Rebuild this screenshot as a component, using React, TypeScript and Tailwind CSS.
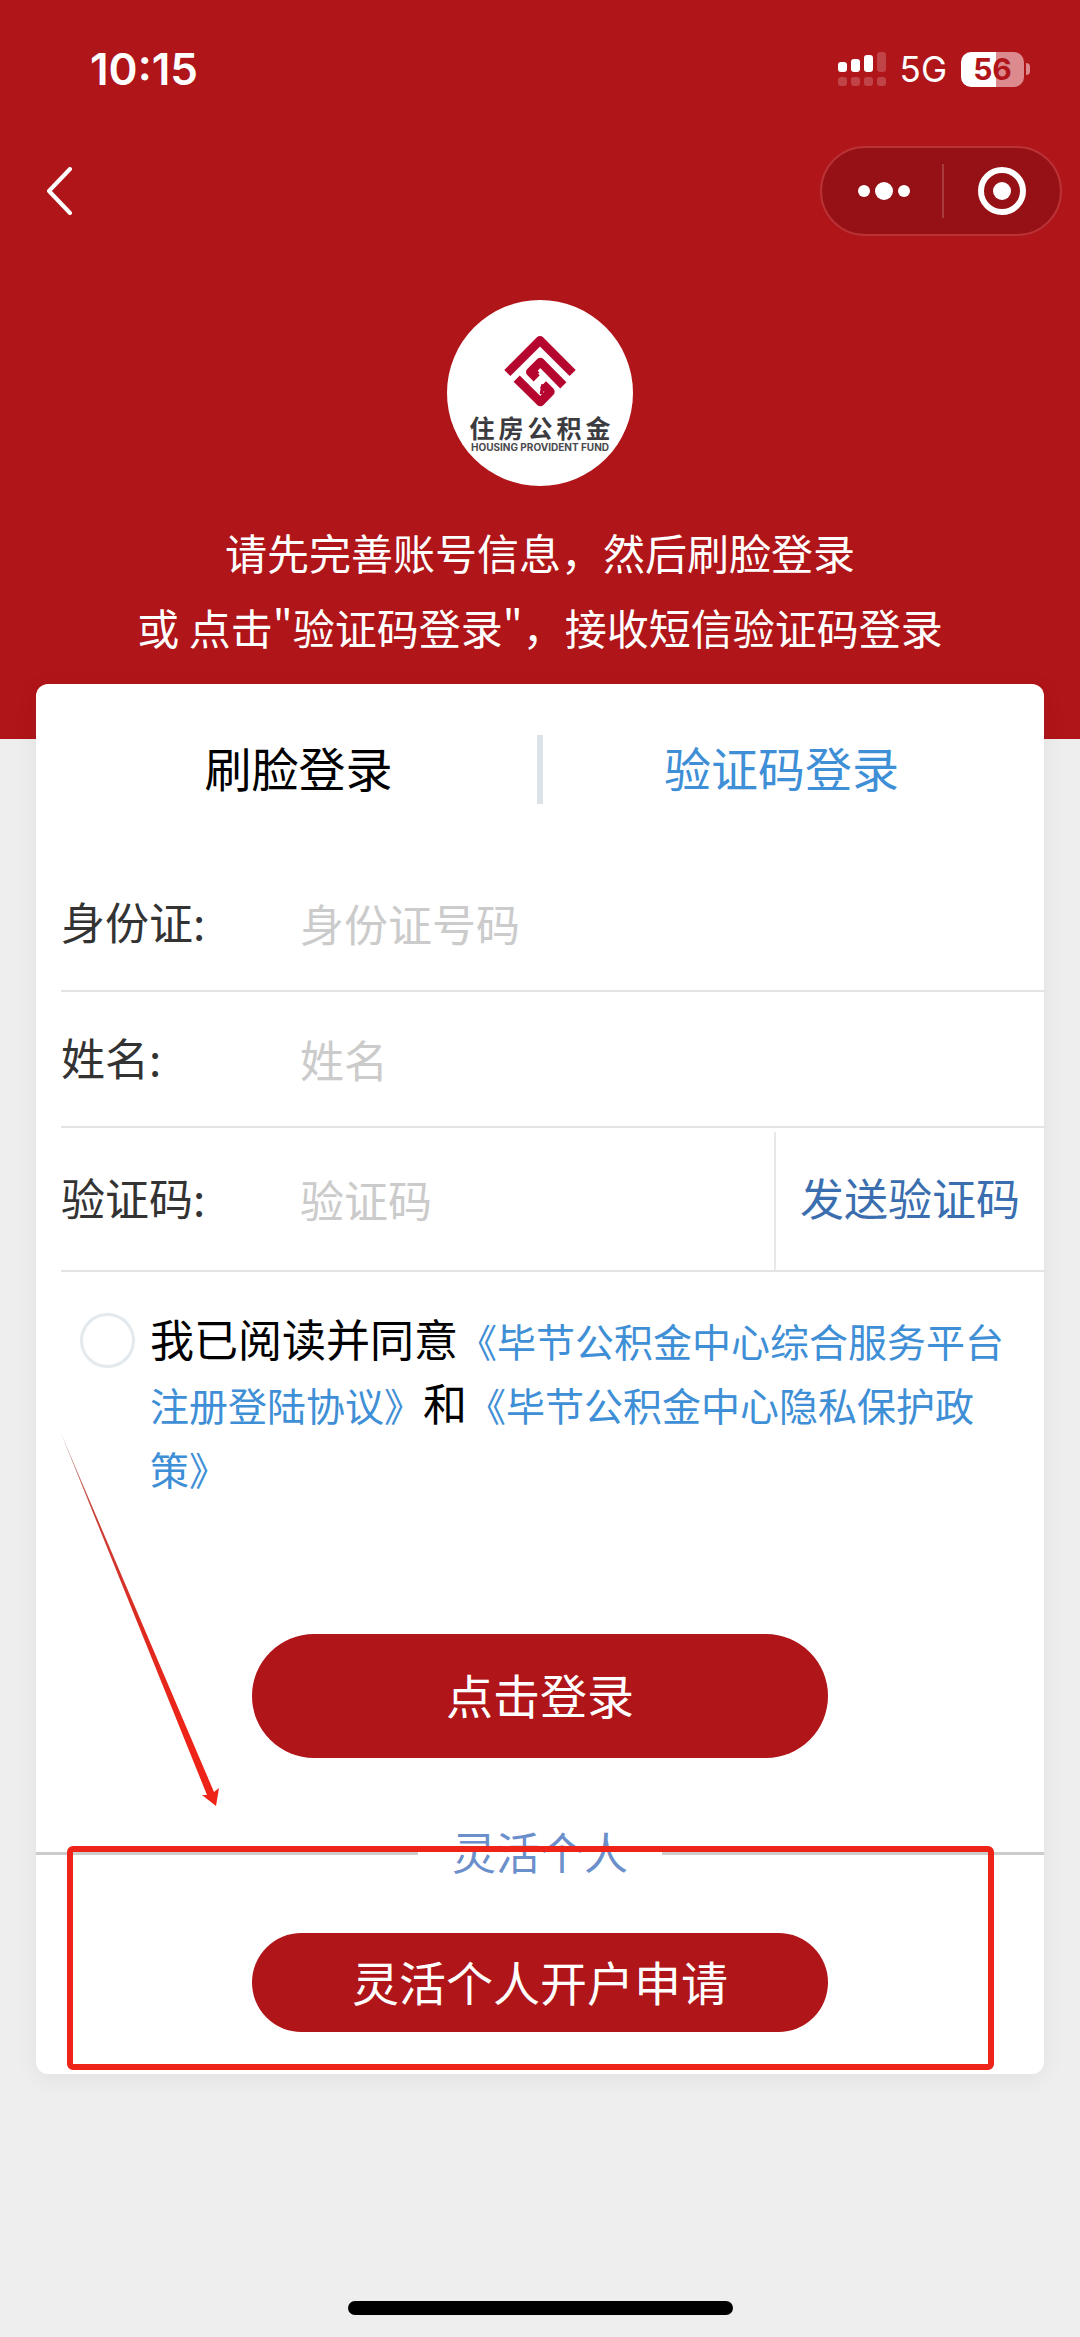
import React from "react";

function StatusBar() {
  return (
    <div className="flex h-[138px] items-center justify-between pl-[90px] pr-[50px]">
      <span className="text-[44px] leading-[52px] font-semibold font-['Inter',sans-serif]">10:15</span>
      <div className="flex items-center gap-[14px]">
        <svg className="h-9 w-12" viewBox="0 0 48 36" fill="#fff" aria-label="信号">
          <rect x="0" y="11" width="9" height="10" rx="3" />
          <rect x="13" y="8" width="9" height="13" rx="3" />
          <rect x="26" y="4" width="9" height="17" rx="3" />
          <rect x="39" y="1" width="9" height="20" rx="3" opacity=".2" />
          <g opacity=".2">
            <rect x="0" y="26" width="9" height="9" rx="3" />
            <rect x="13" y="26" width="9" height="9" rx="3" />
            <rect x="26" y="26" width="9" height="9" rx="3" />
            <rect x="39" y="26" width="9" height="9" rx="3" />
          </g>
        </svg>
        <span className="text-[35px] leading-[40px] font-['Inter',sans-serif]">5G</span>
        <div className="flex items-center gap-[2px]">
          <div className="flex h-[35px] w-[63px] items-center justify-center rounded-[10px] bg-linear-to-r from-white from-55% to-[#dc8a8d] to-55% text-[30px] leading-[35px] font-bold text-[#b01519] font-['Inter',sans-serif]">
            56
          </div>
          <div className="h-3 w-1 rounded-r-full bg-[#dc8a8d]" />
        </div>
      </div>
    </div>
  );
}

function NavBar() {
  return (
    <div className="flex items-center justify-between pt-2 pl-[46px] pr-[18px]">
      <button type="button" aria-label="返回">
        <svg className="h-[48px] w-[27px]" viewBox="0 0 27 48" fill="none" stroke="#fff" strokeWidth="4">
          <path d="M24 2 L3 24 L24 46" strokeLinecap="round" strokeLinejoin="round" />
        </svg>
      </button>
      <div className="flex h-[90px] w-[242px] items-center rounded-full border-2 border-[#b93236] bg-[#951116]">
        <button type="button" aria-label="更多" className="flex flex-1 justify-center pl-1">
          <svg className="h-5 w-[52px]" viewBox="0 0 52 20" fill="#fff">
            <circle cx="6" cy="10" r="6" />
            <circle cx="26" cy="10" r="9" />
            <circle cx="46" cy="10" r="6" />
          </svg>
        </button>
        <div className="h-[54px] w-[2px] bg-[#a93a3d]" />
        <button type="button" aria-label="关闭" className="flex flex-1 justify-center">
          <svg className="size-[50px]" viewBox="0 0 50 50">
            <circle cx="25" cy="25" r="21" fill="none" stroke="#fff" strokeWidth="6" />
            <circle cx="25" cy="25" r="9" fill="#fff" />
          </svg>
        </button>
      </div>
    </div>
  );
}

function Logo() {
  return (
    <div className="mx-auto mt-16 flex size-[186px] flex-col items-center rounded-full bg-white pt-[31px]">
      <svg className="size-20" viewBox="0 0 240 240" fill="none" stroke="#b5062f" strokeWidth="26" strokeLinejoin="round" strokeLinecap="butt">
        <path d="M22 126 L120 28 L218 126" />
        <path d="M190 163 L121 93 L91 123 L110 142" />
        <path d="M98 132 L112 118" strokeWidth="18" />
        <path d="M50 143 L121 213 L151 182 L129 160" />
        <path d="M129 160 L124 190" strokeWidth="10" />
      </svg>
      <div className="mt-[2px] flex gap-1 text-[25px] leading-7 font-bold text-[#3c3c40]">
        <span>住</span>
        <span>房</span>
        <span>公</span>
        <span>积</span>
        <span>金</span>
      </div>
      <div className="text-[10px] leading-3 font-bold whitespace-nowrap text-[#4a4a4e] font-['Inter',sans-serif]">
        HOUSING PROVIDENT FUND
      </div>
    </div>
  );
}

function FieldRow({ id, label, placeholder }: { id: string; label: string; placeholder: string }) {
  return (
    <div className="flex h-[136px] items-center border-b-2 border-[#e4e4e4]">
      <label htmlFor={id} className="w-[239px] pb-1 text-[#333]">
        {label}
      </label>
      <input id={id} type="text" placeholder={placeholder} className="h-full min-w-0 flex-1 outline-none placeholder:text-[#cbcbcb]" />
    </div>
  );
}

function Arrow() {
  return (
    <svg className="pointer-events-none absolute top-[747px] left-6 h-[375px] w-[160px]" viewBox="0 0 160 375" aria-hidden="true">
      <defs>
        <linearGradient id="arrow-fade" x1="0" y1="0" x2="0" y2="1">
          <stop offset="0" stopColor="#b9a9a4" />
          <stop offset="0.2" stopColor="#c8443a" />
          <stop offset="0.5" stopColor="#dc2a20" />
          <stop offset="0.8" stopColor="#ee2418" />
        </linearGradient>
      </defs>
      <path d="M0 0 L154 361 L159 357 L156 375 L142 364 L147 364 Z" fill="url(#arrow-fade)" />
    </svg>
  );
}

export default function App() {
  return (
    <div lang="zh-CN" className="flex min-h-screen flex-col bg-[#eee] font-['Noto_Sans_CJK_SC',sans-serif]">
      <header className="bg-[#b01519] pb-[75px] text-white">
        <StatusBar />
        <NavBar />
        <Logo />
        <p className="mt-7 text-center text-[42px] leading-[75px]">
          请先完善账号信息，然后刷脸登录
          <br />或 点击"验证码登录"，接收短信验证码登录
        </p>
      </header>

      <main className="relative mx-9 -mt-[55px] rounded-xl bg-white shadow-[0_4px_24px_rgba(0,0,0,0.06)]">
        <div className="mb-[2px] flex h-[170px] items-center px-6 text-[47px]">
          <button type="button" className="flex-1 pb-1 text-black">
            刷脸登录
          </button>
          <div className="h-[69px] w-[6px] bg-[#dbe3e8]" />
          <button type="button" className="flex-1 pb-1 text-[#3f8fd6]">
            验证码登录
          </button>
        </div>

        <form className="text-[44px]" onSubmit={(e) => e.preventDefault()}>
          <div className="ml-[25px]">
            <FieldRow id="id-card" label="身份证:" placeholder="身份证号码" />
            <FieldRow id="name" label="姓名:" placeholder="姓名" />
            <div className="flex h-[144px] items-stretch border-b-2 border-[#e4e4e4]">
              <label htmlFor="code" className="flex w-[239px] items-center pb-1 text-[#333]">
                验证码:
              </label>
              <input id="code" type="text" placeholder="验证码" className="min-w-0 flex-1 outline-none placeholder:text-[#cbcbcb]" />
              <button type="button" className="mt-1 border-l-2 border-[#e8e8e8] px-6 pb-2 text-[#3a6eae]">
                发送验证码
              </button>
            </div>
          </div>

          <div className="flex gap-[15px] pt-9 pr-9 pl-11">
            <input
              id="agree"
              type="checkbox"
              className="mt-[5px] size-[55px] shrink-0 appearance-none rounded-full border-[3px] border-[#e3e9ec] bg-white checked:bg-[#3f8fd6]"
            />
            <p className="text-[39px] leading-[64px] text-[#3f8fd6]">
              <label htmlFor="agree" className="text-[44px] leading-none text-black">
                我已阅读并同意
              </label>
              <a href="#agreement">《毕节公积金中心综合服务平台注册登陆协议》</a>
              <span className="text-[44px] leading-none text-black">和</span>
              <a href="#privacy">《毕节公积金中心隐私保护政策》</a>
            </p>
          </div>

          <button
            type="submit"
            className="mx-auto mt-[134px] block h-[124px] w-[576px] rounded-full bg-[#b01519] pb-1 text-[47px] text-white"
          >
            点击登录
          </button>
        </form>

        <section className="mt-[63px] pb-[42px]">
          <div className="flex items-center gap-[34px] text-[44px] leading-[60px] text-[#6b8fcb]">
            <div className="h-[3px] flex-1 bg-[#ccc]" />
            <h2 className="pb-1">灵活个人</h2>
            <div className="h-[3px] flex-1 bg-[#ccc]" />
          </div>
          <button
            type="button"
            className="mx-auto mt-12 block h-[99px] w-[576px] rounded-full bg-[#b01519] pb-[2px] text-[47px] text-white"
          >
            灵活个人开户申请
          </button>
        </section>

        <Arrow />
        <div className="pointer-events-none absolute right-[50px] bottom-[4px] left-[31px] h-[224px] rounded-md border-[6px] border-[#ee2418]" />
      </main>

      <div className="mx-auto mt-auto mb-[22px] h-[14px] w-[385px] rounded-full bg-black" />
    </div>
  );
}
